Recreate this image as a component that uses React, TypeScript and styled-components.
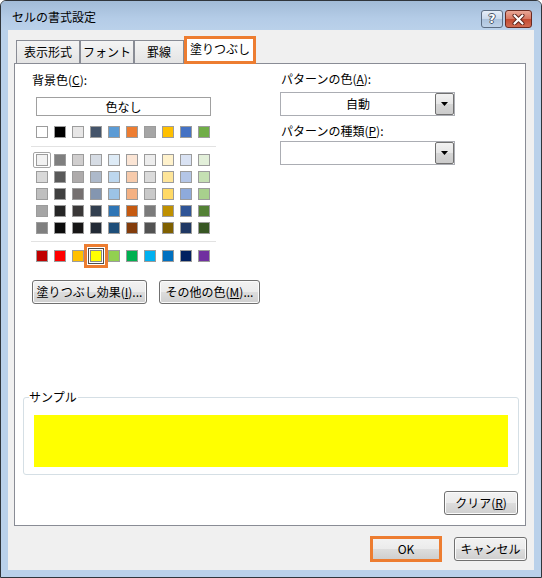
import styled, { createGlobalStyle, css } from "styled-components";

const ORANGE = '#ed7d31';

const themeColors = ['#ffffff', '#000000', '#e7e6e6', '#44546a', '#5b9bd5', '#ed7d31', '#a5a5a5', '#ffc000', '#4472c4', '#70ad47'];
const shadeRows = [
  ['#f2f2f2', '#7f7f7f', '#d0cece', '#d6dce4', '#deebf6', '#fbe5d5', '#ededed', '#fff2cc', '#d9e2f3', '#e2efd9'],
  ['#d8d8d8', '#595959', '#aeabab', '#adb9ca', '#bdd7ee', '#f7cbac', '#dbdbdb', '#fee599', '#b4c6e7', '#c5e0b3'],
  ['#bfbfbf', '#3f3f3f', '#757070', '#8496b0', '#9cc3e5', '#f4b183', '#c9c9c9', '#ffd965', '#8eaadb', '#a8d08d'],
  ['#a5a5a5', '#262626', '#3a3838', '#323f4f', '#2e75b5', '#c55a11', '#7b7b7b', '#bf9000', '#2f5496', '#538135'],
  ['#7f7f7f', '#0c0c0c', '#171616', '#222a35', '#1e4e79', '#833c0b', '#525252', '#7f6000', '#1f3864', '#375623'],
];
const standardColors = ['#c00000', '#ff0000', '#ffc000', '#ffff00', '#92d050', '#00b050', '#00b0f0', '#0070c0', '#002060', '#7030a0'];

const tabs = [
  { text: '表示形式', width: 64 },
  { text: 'フォント', width: 54 },
  { text: '罫線', width: 50 },
  { text: '塗りつぶし', width: 72, active: true },
];

const GlobalStyle = createGlobalStyle`
  html, body { margin: 0; padding: 0; background: #fff; }
  body {
    font-family: "Noto Sans CJK JP", "Noto Sans", sans-serif;
    font-size: 12px;
    line-height: 16px;
    color: #000;
  }
  * { box-sizing: border-box; }
`;

// window frame
const Window = styled.div`
  width: 542px;
  height: 578px;
  display: flex;
  flex-direction: column;
  border: 1px solid #30353b;
  border-radius: 6px 6px 0 0;
  background: #bad1ea;
  overflow: hidden;
`;
const TitleBar = styled.div`
  height: 29px;
  flex: 0 0 29px;
  display: flex;
  align-items: flex-start;
  padding: 0 9px 0 11px;
  background: linear-gradient(#a2bbd7, #b4cce7 60%, #bad1ea);
`;
const Title = styled.div`
  margin-top: 8px;
  font-size: 12px;
  line-height: 16px;
`;
const CaptionButtons = styled.div`
  margin: 9px 0 0 auto;
  display: flex;
  gap: 2px;
`;
const HelpButton = styled.div`
  width: 22px;
  height: 18px;
  border: 1px solid #5c6d82;
  border-radius: 3px;
  background: linear-gradient(#e6eef8, #cad9eb 50%, #abc2dc 51%, #bfd2e8);
  display: flex;
  align-items: center;
  justify-content: center;
  font-family: "DejaVu Sans", sans-serif;
  font-weight: bold;
  font-size: 12px;
  color: #fff;
  text-shadow: 1px 0 0 #4a5566, -1px 0 0 #4a5566, 0 1px 0 #4a5566, 0 -1px 0 #4a5566;
`;
const CloseButton = styled.div`
  width: 27px;
  height: 18px;
  border: 1px solid #6a2a20;
  border-radius: 3px;
  background: linear-gradient(#e9a897, #d77660 50%, #c34a30 51%, #d06b52);
  display: flex;
  align-items: center;
  justify-content: center;
`;

// client area
const Client = styled.div`
  flex: 1;
  margin: 0 7px 7px 7px;
  background: #f0f0f0;
  padding: 6px 8px 0 6px;
  display: flex;
  flex-direction: column;
`;
const TabStrip = styled.div`
  display: flex;
  align-items: flex-end;
  height: 27px;
  padding-left: 2px;
  position: relative;
  z-index: 1;
`;
const Tab = styled.div<{ $w: number; $active?: boolean }>`
  width: ${p => p.$w}px;
  height: 23px;
  border: 1px solid #898c95;
  border-bottom: none;
  background: linear-gradient(#f4f4f4, #e4e4e4);
  display: flex;
  align-items: center;
  justify-content: center;
  white-space: nowrap;
  ${p => p.$active && css`
    height: 28px;
    margin-bottom: -1px;
    background: #fff;
    border: 3px solid ${ORANGE};
    padding-bottom: 2px;
  `}
`;
const Panel = styled.div`
  width: 512px;
  height: 463px;
  border: 1px solid #898c95;
  background: #fff;
  display: flex;
  flex-direction: column;
`;
const TopArea = styled.div`
  display: flex;
  align-items: flex-start;
  padding: 8px 0 0 16px;
`;
const LeftCol = styled.div`
  flex: 0 0 185px;
  min-width: 0;
  display: flex;
  flex-direction: column;
`;
const RightCol = styled.div`
  flex: 0 0 175px;
  margin: -1px 0 0 64px;
  display: flex;
  flex-direction: column;
`;
const Label = styled.div<{ $top?: number }>`
  margin-top: ${p => p.$top ?? 0}px;
  margin-left: 1px;
  white-space: nowrap;
`;
const NoColorBox = styled.div`
  margin: 9px 0 0 5px;
  width: 175px;
  height: 19px;
  border: 1px solid #a0a0a0;
  display: flex;
  align-items: center;
  justify-content: center;
`;
const SwatchRow = styled.div<{ $top?: number }>`
  display: flex;
  gap: 6px;
  padding-left: 5px;
  margin-top: ${p => p.$top ?? 0}px;
`;
const ShadeGrid = styled.div`
  display: flex;
  flex-direction: column;
  gap: 5px;
  margin-top: 7px;
`;
const Separator = styled.div<{ $top: number }>`
  width: 185px;
  height: 1px;
  margin-top: ${p => p.$top}px;
  background: #e2e2e2;
`;
const Swatch = styled.div<{ $color: string; $focused?: boolean; $selected?: boolean }>`
  position: relative;
  width: 12px;
  height: 12px;
  flex: 0 0 12px;
  border: 1px solid #9c9c9c;
  background: ${p => p.$color};
  ${p => p.$focused && css`
    &::after {
      content: '';
      position: absolute;
      inset: -3px -4px -3px -4px;
      border: 1px solid #a6a6a6;
      border-radius: 2px;
    }
  `}
  ${p => p.$selected && css`
    border-color: #8a8a8a;
    box-shadow: 0 0 0 1px #fff, 0 0 0 2px #4d4d4d, 0 0 0 3px #fff, 0 0 0 6px ${ORANGE};
  `}
`;
const ButtonRow = styled.div`
  display: flex;
  gap: 12px;
  margin: 18px 0 0 1px;
  white-space: nowrap;
`;
const PushButton = styled.div<{ $w: number; $marked?: boolean }>`
  width: ${p => p.$w}px;
  flex: 0 0 ${p => p.$w}px;
  height: 24px;
  border: 1px solid #707070;
  border-radius: 3px;
  background: linear-gradient(#f2f2f2 0%, #ebebeb 50%, #dddddd 51%, #cfcfcf 100%);
  box-shadow: inset 0 0 0 1px #fbfbfb;
  color: #000;
  display: flex;
  align-items: center;
  justify-content: center;
  white-space: nowrap;
  cursor: default;
  ${p => p.$marked && css`
    height: 26px;
    border: 3px solid ${ORANGE};
    border-radius: 0;
    box-shadow: none;
  `}
`;
const Combo = styled.div<{ $top: number }>`
  margin-top: ${p => p.$top}px;
  height: 24px;
  border: 1px solid #abadb3;
  background: #fff;
  display: flex;
`;
const ComboText = styled.div`
  flex: 1;
  display: flex;
  align-items: center;
  justify-content: center;
`;
const DropButton = styled.div`
  width: 19px;
  border: 1px solid #707070;
  border-radius: 2px;
  background: linear-gradient(#f2f2f2, #e6e6e6 50%, #d6d6d6 51%, #cbcbcb);
  display: flex;
  align-items: center;
  justify-content: center;
`;
const SampleGroup = styled.div`
  position: relative;
  margin: auto 6px 0 8px;
  height: 78px;
  border: 1px solid #d5dfe5;
  border-radius: 3px;
  padding: 17px 10px 7px 10px;
`;
const Legend = styled.div`
  position: absolute;
  top: -9px;
  left: 5px;
  padding-right: 1px;
  background: #fff;
`;
const SampleFill = styled.div`
  height: 52px;
  background: #ffff00;
`;
const ClearRow = styled.div`
  display: flex;
  justify-content: flex-end;
  margin-top: 16px;
  padding: 0 7px 10px 0;
`;
const Footer = styled.div`
  display: flex;
  justify-content: flex-end;
  align-items: center;
  gap: 12px;
  margin: 10px -1px 0 0;
`;

function DropArrow() {
  return (
    <svg width="7" height="4" viewBox="0 0 7 4">
      <polygon points="0,0 7,0 3.5,4" fill="#000" />
    </svg>
  );
}

function CloseGlyph() {
  return (
    <svg width="13" height="11" viewBox="0 0 13 11">
      <path d="M2.5 1.5 L10.5 9.5 M10.5 1.5 L2.5 9.5" stroke="#5b2219" strokeWidth="4" strokeLinecap="round" />
      <path d="M2.5 1.5 L10.5 9.5 M10.5 1.5 L2.5 9.5" stroke="#fff" strokeWidth="2.2" strokeLinecap="round" />
    </svg>
  );
}

export default function App() {
  return (
    <>
      <GlobalStyle />
      <Window>
        <TitleBar>
          <Title>セルの書式設定</Title>
          <CaptionButtons>
            <HelpButton>?</HelpButton>
            <CloseButton><CloseGlyph /></CloseButton>
          </CaptionButtons>
        </TitleBar>
        <Client>
          <TabStrip>
            {tabs.map(t => (
              <Tab key={t.text} $w={t.width} $active={t.active}>{t.text}</Tab>
            ))}
          </TabStrip>
          <Panel>
            <TopArea>
              <LeftCol>
                <Label>背景色(<u>C</u>):</Label>
                <NoColorBox>色なし</NoColorBox>
                <SwatchRow $top={10}>
                  {themeColors.map(c => <Swatch key={c} $color={c} />)}
                </SwatchRow>
                <Separator $top={8} />
                <ShadeGrid>
                  {shadeRows.map((row, i) => (
                    <SwatchRow key={i}>
                      {row.map((c, j) => <Swatch key={c + j} $color={c} $focused={i === 0 && j === 0} />)}
                    </SwatchRow>
                  ))}
                </ShadeGrid>
                <Separator $top={7} />
                <SwatchRow $top={8}>
                  {standardColors.map((c, j) => <Swatch key={c + j} $color={c} $selected={c === '#ffff00'} />)}
                </SwatchRow>
                <ButtonRow>
                  <PushButton role="button" $w={115}>塗りつぶし効果(<u>I</u>)...</PushButton>
                  <PushButton role="button" $w={101}>その他の色(<u>M</u>)...</PushButton>
                </ButtonRow>
              </LeftCol>
              <RightCol>
                <Label>パターンの色(<u>A</u>):</Label>
                <Combo $top={5}>
                  <ComboText>自動</ComboText>
                  <DropButton><DropArrow /></DropButton>
                </Combo>
                <Label $top={7}>パターンの種類(<u>P</u>):</Label>
                <Combo $top={2}>
                  <ComboText />
                  <DropButton><DropArrow /></DropButton>
                </Combo>
              </RightCol>
            </TopArea>
            <SampleGroup>
              <Legend>サンプル</Legend>
              <SampleFill />
            </SampleGroup>
            <ClearRow>
              <PushButton role="button" $w={74}>クリア(<u>R</u>)</PushButton>
            </ClearRow>
          </Panel>
          <Footer>
            <PushButton role="button" $w={72} $marked>OK</PushButton>
            <PushButton role="button" $w={73}>キャンセル</PushButton>
          </Footer>
        </Client>
      </Window>
    </>
  );
}
